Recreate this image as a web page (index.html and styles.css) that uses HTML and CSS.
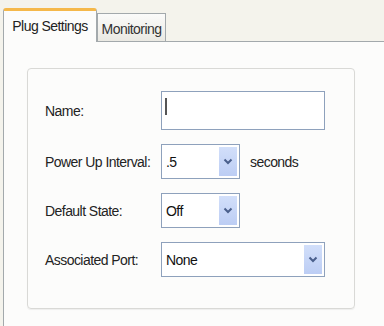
FILE: index.html
```html
<!DOCTYPE html>
<html>
<head>
<meta charset="utf-8">
<link rel="stylesheet" href="styles.css">
</head>
<body>
<div class="window">
  <div class="tabs">
    <div class="tab active">Plug Settings</div>
    <div class="tab">Monitoring</div>
  </div>
  <div class="panel">
    <div class="group">
      <div class="row">
        <span class="label">Name:</span>
        <div class="field wide text"><span class="caret"></span></div>
      </div>
      <div class="row">
        <span class="label">Power Up Interval:</span>
        <div class="field narrow select"><span class="value">.5</span><span class="btn"><svg width="10" height="7" viewBox="0 0 10 7"><path d="M1.5 1.5 L5 5 L8.5 1.5" fill="none" stroke="#4a5f8c" stroke-width="2"/></svg></span></div>
        <span class="unit">seconds</span>
      </div>
      <div class="row">
        <span class="label">Default State:</span>
        <div class="field narrow select"><span class="value">Off</span><span class="btn"><svg width="10" height="7" viewBox="0 0 10 7"><path d="M1.5 1.5 L5 5 L8.5 1.5" fill="none" stroke="#4a5f8c" stroke-width="2"/></svg></span></div>
      </div>
      <div class="row">
        <span class="label">Associated Port:</span>
        <div class="field wide select"><span class="value">None</span><span class="btn"><svg width="10" height="7" viewBox="0 0 10 7"><path d="M1.5 1.5 L5 5 L8.5 1.5" fill="none" stroke="#4a5f8c" stroke-width="2"/></svg></span></div>
      </div>
    </div>
  </div>
</div>
</body>
</html>
```
FILE: styles.css
```css
html, body {
  margin: 0;
  padding: 0;
}
body {
  width: 384px;
  height: 326px;
  overflow: hidden;
  background: #f4f3ec;
  font-family: "Liberation Sans", Arial, sans-serif;
  font-size: 14px;
  color: #232323;
  letter-spacing: -0.55px;
}
.window {
  padding-left: 3px;
}
.tabs {
  display: flex;
  align-items: flex-end;
  height: 41px;
}
.tab {
  box-sizing: border-box;
  height: 28px;
  width: 69px;
  border: 1px solid #a3a9ac;
  border-bottom: none;
  background: linear-gradient(#fbfbfa, #eae9e3);
  display: flex;
  align-items: center;
  justify-content: center;
  padding-top: 2px;
  color: #333;
}
.tab.active {
  height: 34px;
  width: 94px;
  border-top: 3px solid #f5b84a;
  border-radius: 3px 3px 0 0;
  background: #fcfcfb;
  padding-top: 0;
  padding-bottom: 2px;
  position: relative;
  z-index: 1;
  margin-bottom: -1px;
  color: #222;
}
.panel {
  border-top: 1px solid #a3a9ac;
  border-left: 1px solid #a3a9ac;
  background: #fcfcfb;
  height: 290px;
  padding: 26px 0 0 23px;
  box-sizing: border-box;
}
.group {
  box-sizing: border-box;
  width: 328px;
  height: 241px;
  border: 1px solid #d9d9d6;
  border-radius: 4px;
  box-shadow: 0 1px 1px rgba(0, 0, 0, 0.06);
  padding: 22px 0 0 17px;
  display: flex;
  flex-direction: column;
  gap: 14px;
}
.row {
  display: flex;
  align-items: center;
}
.label {
  width: 116px;
  flex: none;
}
.field {
  box-sizing: border-box;
  border: 1px solid #8ea1bc;
  background: #fff;
  display: flex;
  align-items: center;
}
.wide {
  width: 164px;
}
.narrow {
  width: 79px;
}
.text {
  height: 39px;
  padding-left: 3px;
}
.caret {
  width: 2px;
  height: 17px;
  background: #555;
  margin-top: -8px;
}
.select {
  height: 35px;
  padding: 2px;
}
.value {
  flex: 1;
  padding-left: 2px;
  color: #111;
}
.btn {
  width: 18px;
  align-self: stretch;
  background: linear-gradient(#d2dffa, #bccdf4);
  display: flex;
  align-items: center;
  justify-content: center;
}
.unit {
  margin-left: 10px;
}
```
